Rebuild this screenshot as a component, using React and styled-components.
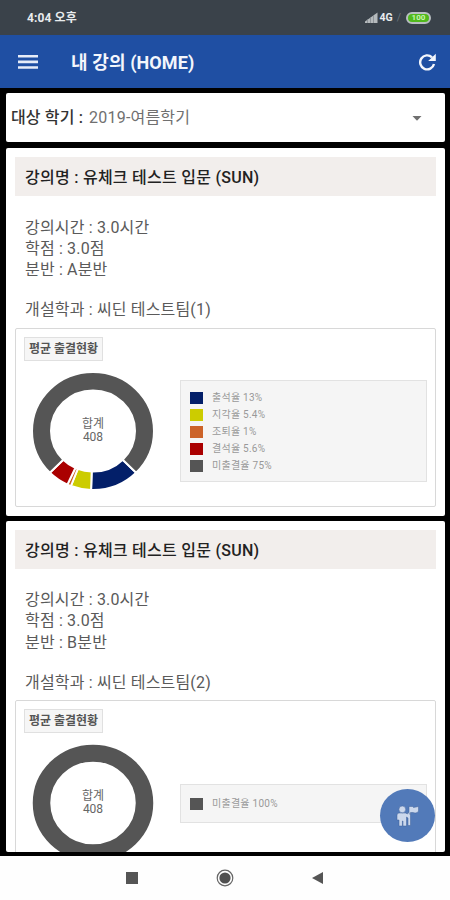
import styled, { createGlobalStyle } from "styled-components";

const GlobalStyle = createGlobalStyle`
  * {
    box-sizing: border-box;
  }
  body {
    margin: 0;
    background: #000;
    font-family: Roboto, "Noto Sans CJK KR", sans-serif;
  }
`;

const Screen = styled.div`
  width: 450px;
  height: 900px;
  display: flex;
  flex-direction: column;
  overflow: hidden;
  position: relative;
`;

const StatusBar = styled.div`
  flex: none;
  height: 35px;
  padding: 0 19px 0 27px;
  display: flex;
  align-items: center;
  justify-content: space-between;
  background: #3a424a;
  color: #e9ecee;
  font-size: 12px;
  font-weight: 700;
  line-height: 14px;
  letter-spacing: 0.1px;
`;

const StatusIcons = styled.div`
  display: flex;
  align-items: center;
  font-size: 10.5px;
  letter-spacing: 0;
`;

const Slash = styled.span`
  margin: 0 5px 0 4px;
  color: #69727a;
  font-weight: 400;
`;

const Battery = styled.span`
  width: 25px;
  height: 12px;
  border: 2px solid #b9bfc2;
  border-radius: 6px;
  background: #50b91c;
  color: #c9f5b3;
  font-size: 8px;
  line-height: 8px;
  text-align: center;
`;

const AppBar = styled.header`
  flex: none;
  height: 53px;
  padding: 0 13px 0 18px;
  display: flex;
  align-items: center;
  background: #1f4fa3;
  color: #f3f6fc;
`;

const Title = styled.h1`
  flex: 1;
  margin: 0 0 0 33px;
  padding-top: 2px;
  font-size: 18px;
  font-weight: 700;
  line-height: 26px;
  letter-spacing: 0.1px;
`;

const Content = styled.main`
  flex: none;
  height: 768px;
  padding: 5px 5px 4px 6px;
  display: flex;
  flex-direction: column;
  overflow: hidden;
`;

const Card = styled.section`
  flex: none;
  border-radius: 2px;
  background: #fff;
`;

const SemesterSelect = styled(Card)`
  height: 49px;
  margin-bottom: 6px;
  padding: 1px 23px 0 5px;
  display: flex;
  align-items: center;
  color: #707070;
  font-size: 16px;
  line-height: 22px;
`;

const SelectLabel = styled.span`
  margin-right: 6px;
  color: #333;
  font-weight: 500;
  letter-spacing: 0.15px;
`;

const SelectValue = styled.span`
  flex: 1;
  letter-spacing: 0.2px;
`;

const LectureCard = styled(Card)`
  height: ${(props) => props.$height}px;
  margin-bottom: 5px;
  padding: 9px 9px 0;
  overflow: hidden;
`;

const LectureName = styled.h2`
  height: 39px;
  margin: 0;
  padding-left: 10px;
  background: #f2eeec;
  color: #222;
  font-size: 16px;
  font-weight: 500;
  line-height: 41px;
  letter-spacing: 0.26px;
`;

const Details = styled.div`
  padding: 20.5px 0 0 10px;
  color: #5a5a5a;
  font-size: 16px;
  line-height: 21.3px;
  letter-spacing: 0.17px;
`;

const Detail = styled.div`
  margin-top: ${(props) => (props.$gap ? 18.8 : 0)}px;
`;

const Panel = styled.div`
  height: 179px;
  margin-top: 7.5px;
  padding: 8px;
  border: 1px solid #d8d8d8;
  border-radius: 2px;
`;

const Badge = styled.div`
  width: 79px;
  height: 24px;
  border: 1px solid #e0e0e0;
  background: #f6f6f6;
  color: #555;
  font-size: 12px;
  font-weight: 700;
  line-height: 23px;
  text-align: center;
`;

const ChartRow = styled.div`
  height: 118px;
  margin-top: 11px;
  padding-left: 8px;
  display: flex;
  align-items: center;
  justify-content: space-between;
`;

const Donut = styled.div`
  width: 122px;
  height: 118px;
  display: grid;
  place-items: center;

  > * {
    grid-area: 1 / 1;
  }
`;

const Total = styled.div`
  color: #666;
  font-size: 12px;
  line-height: 13px;
  text-align: center;
`;

const Legend = styled.ul`
  width: 247px;
  margin: 0;
  padding: ${(props) => (props.$single ? "10px 9px 9px" : "8px 9px 6px")};
  border: 1px solid #e2e2e2;
  background: #f5f5f5;
  list-style: none;
`;

const LegendItem = styled.li`
  height: 17.2px;
  display: flex;
  align-items: center;
  gap: 9px;
  color: #999;
  font-size: 10px;
  line-height: 14px;
  letter-spacing: 0.25px;
`;

const Swatch = styled.span`
  width: 13px;
  height: 12px;
  background: ${(props) => props.$color};
`;

const Fab = styled.button`
  position: absolute;
  top: 789px;
  left: 380px;
  width: 55px;
  height: 53px;
  padding: 0;
  border: 0;
  border-radius: 50%;
  display: grid;
  place-items: center;
  background: #527ab9;
`;

const NavBar = styled.nav`
  flex: none;
  height: 44px;
  padding: 0 126px;
  display: flex;
  align-items: center;
  justify-content: space-between;
  background: #fefefe;
`;

const NAVY = "#031f69";
const YELLOW = "#cccc00";
const ORANGE = "#cc6329";
const RED = "#aa0000";
const GRAY = "#555";

const lectures = [
  {
    id: 1,
    name: "유체크 테스트 입문 (SUN)",
    group: "A분반",
    department: "씨딘 테스트팀(1)",
    height: 367.5,
    rates: [
      { label: "출석율", value: 13, color: NAVY },
      { label: "지각율", value: 5.4, color: YELLOW },
      { label: "조퇴율", value: 1, color: ORANGE },
      { label: "결석율", value: 5.6, color: RED },
      { label: "미출결율", value: 75, color: GRAY },
    ],
  },
  {
    id: 2,
    name: "유체크 테스트 입문 (SUN)",
    group: "B분반",
    department: "씨딘 테스트팀(2)",
    height: 331.5,
    rates: [{ label: "미출결율", value: 100, color: GRAY }],
  },
];

const point = (angle, radius) => {
  const rad = (angle * Math.PI) / 180;
  return `${61 + radius * Math.sin(rad)} ${61 - radius * Math.cos(rad)}`;
};

const slicePath = (start, end) => {
  const large = end - start > 180 ? 1 : 0;
  return `M${point(start, 61)} A61 61 0 ${large} 1 ${point(end, 61)} L${point(end, 42)} A42 42 0 ${large} 0 ${point(start, 42)}Z`;
};

const DonutChart = ({ rates }) => {
  let angle = 135;

  return (
    <Donut>
      <svg width="122" height="118" viewBox="0 0 122 122" preserveAspectRatio="none">
        {rates.length === 1 ? (
          <circle cx="61" cy="61" r="51.5" fill="none" stroke={rates[0].color} strokeWidth="17.5" />
        ) : (
          rates.map((rate) => {
            const start = angle;
            angle += rate.value * 3.6;
            return (
              <path key={rate.label} d={slicePath(start, angle)} fill={rate.color} stroke="#fff" strokeWidth="2" />
            );
          })
        )}
      </svg>
      <Total>
        합계
        <br />
        408
      </Total>
    </Donut>
  );
};

const Lecture = ({ lecture }) => (
  <LectureCard $height={lecture.height}>
    <LectureName>강의명 : {lecture.name}</LectureName>
    <Details>
      <Detail>강의시간 : 3.0시간</Detail>
      <Detail>학점 : 3.0점</Detail>
      <Detail>분반 : {lecture.group}</Detail>
      <Detail $gap>개설학과 : {lecture.department}</Detail>
    </Details>
    <Panel>
      <Badge>평균 출결현황</Badge>
      <ChartRow>
        <DonutChart rates={lecture.rates} />
        <Legend $single={lecture.rates.length === 1}>
          {lecture.rates.map((rate) => (
            <LegendItem key={rate.label}>
              <Swatch $color={rate.color} />
              {rate.label} {rate.value}%
            </LegendItem>
          ))}
        </Legend>
      </ChartRow>
    </Panel>
  </LectureCard>
);

const App = () => {
  return (
    <>
      <GlobalStyle />
      <Screen>
        <StatusBar>
          <span>4:04 오후</span>
          <StatusIcons>
            <svg width="14" height="12" viewBox="0 0 14 12" fill="#b5babd">
              <path d="M0 11V9.5L12.5 0.5V11Z" />
              <path d="M2.5 7V11M5.5 5V11M8.5 3V11" stroke="#7d8489" strokeWidth="0.7" />
            </svg>
            4G
            <Slash>/</Slash>
            <Battery>100</Battery>
          </StatusIcons>
        </StatusBar>
        <AppBar>
          <svg width="20" height="14" viewBox="0 0 20 14" fill="#e6ecf8">
            <path d="M0 0H20V2.6H0ZM0 5.6H20V8.2H0ZM0 11.2H20V13.8H0Z" />
          </svg>
          <Title>내 강의 (HOME)</Title>
          <svg width="19" height="18" viewBox="0 0 19 18">
            <path d="M16 11A7 7 0 1 1 14 4.3" fill="none" stroke="#f3f6fc" strokeWidth="2.4" />
            <path d="M17.8 0.8V8H10.2Z" fill="#f3f6fc" />
          </svg>
        </AppBar>
        <Content>
          <SemesterSelect>
            <SelectLabel>대상 학기 :</SelectLabel>
            <SelectValue>2019-여름학기</SelectValue>
            <svg width="10" height="5" viewBox="0 0 10 5">
              <path d="M0.5 0H9.5L5 4.8Z" fill="#707070" />
            </svg>
          </SemesterSelect>
          {lectures.map((lecture) => (
            <Lecture key={lecture.id} lecture={lecture} />
          ))}
        </Content>
        <NavBar>
          <svg width="12" height="12">
            <rect width="12" height="12" fill="#555" />
          </svg>
          <svg width="18" height="18" viewBox="0 0 18 18">
            <circle cx="9" cy="9" r="7.8" fill="none" stroke="#666" strokeWidth="1.2" />
            <circle cx="9" cy="9" r="5.6" fill="#505050" />
          </svg>
          <svg width="12" height="12">
            <path d="M0 6L11 0V12Z" fill="#555" />
          </svg>
        </NavBar>
        <Fab aria-label="출결">
          <svg width="23" height="22" viewBox="0 0 23 22" fill="#ccd8ec" stroke="#3f609a" strokeWidth="0.5">
            <path d="M3 8H9.5L11.5 9V7.5H14.5V20.5H12V13L10.5 12V21H7V16H6.4V21H3V15H1V10Q1 8 3 8Z" />
            <circle cx="6.3" cy="4.4" r="3.4" />
            <path d="M13 1.5H16.5L17.5 2.5L22.5 1.5V6.5Q20 9 17 7.5H14.5V9H13Z" />
          </svg>
        </Fab>
      </Screen>
    </>
  );
};

export default App;
